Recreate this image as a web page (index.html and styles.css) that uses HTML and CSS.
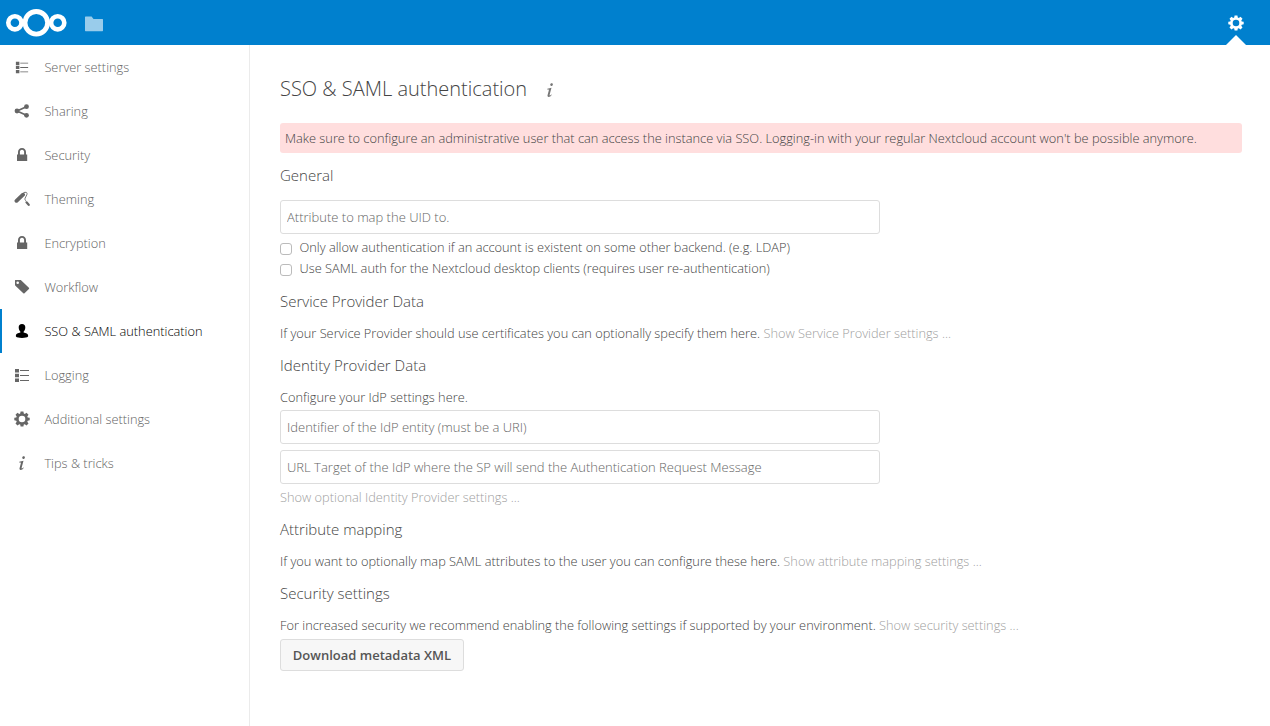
FILE: index.html
```html
<!DOCTYPE html>
<html lang="en">
<head>
<meta charset="utf-8">
<title>SSO &amp; SAML authentication</title>
<link rel="stylesheet" href="styles.css">
</head>
<body>
<svg class="defs" width="0" height="0">
  <symbol id="list" viewBox="0 0 16 16"><path d="M1 2h4v3.6H1zM1 6.7h4v3.6H1zM1 11.4h4V15H1zM6 3h9v1.1H6zM6 8h9v1.1H6zM6 13h9v1.1H6z"/></symbol>
  <symbol id="lock" viewBox="0 0 16 16"><path d="M8 1C5.500 1 4 2.900 4 5v2.500H3V14h10.200V7.500H12V5c0-2.100-1.500-4-4-4zm0 1.800c1.400 0 2.100 1 2.100 2.200v2.500H5.900V5c0-1.200.7-2.200 2.100-2.200z"/></symbol>
  <symbol id="gear" viewBox="0 0 16 16"><path fill-rule="evenodd" d="M6.600.5h2.800l.4 2 1 .4 1.700-1.200 2 2-1.200 1.700.4 1 2 .4v2.500l-2 .4-.4 1 1.200 1.700-2 2-1.700-1.200-1 .4-.4 2H6.600l-.4-2-1-.4-1.700 1.200-2-2 1.200-1.700-.4-1-2-.4V6.800l2-.4.4-1-1.200-1.700 2-2 1.700 1.200 1-.4zM8 4.700a3.300 3.300 0 1 0 0 6.600 3.300 3.300 0 0 0 0-6.600z"/></symbol>
  <symbol id="info" viewBox="0 0 16 16"><path d="M9.600 1.200c.8 0 1.300.5 1.300 1.200 0 .9-.7 1.500-1.500 1.500-.7 0-1.200-.5-1.200-1.200 0-.9.600-1.500 1.400-1.500zM5.300 6.800l4.200-1-1.800 6.700c-.2.700-.1 1 .2 1 .4 0 .8-.4 1.400-1.100l.5.400C8.800 14.300 7.800 15 6.700 15c-1.100 0-1.400-.8-1.100-1.900l1.200-4.500c.2-.8 0-1.100-.5-1.100l-1.100.1z"/></symbol>
</svg>
<header class="header">
  <div class="brand">
    <svg class="logo" viewBox="0 0 62 30" width="62" height="30"><g fill="none" stroke="#fff"><circle cx="31.300" cy="14.800" r="11.300" stroke-width="4.800"/><circle cx="9.900" cy="14.800" r="6.600" stroke-width="4.600"/><circle cx="52.700" cy="14.800" r="6.600" stroke-width="4.600"/></g></svg>
    <svg class="folder" viewBox="0 0 18 16" width="18" height="16"><path d="M.6.500h6l1.900 2.400h8.900c.4 0 .6.200.6.600v11c0 .4-.2.700-.6.700H.6c-.4 0-.6-.3-.6-.7V1.100C0 .7.200.5.600.500z"/></svg>
  </div>
  <div class="menu"><svg width="16" height="16"><use href="#gear"/></svg><span class="caret"></span></div>
</header>
<div class="layout">
  <nav class="sidebar">
    <a class="item"><svg class="icon small"><use href="#list"/></svg><span>Server settings</span></a>
    <a class="item"><svg class="icon" viewBox="0 0 16 16"><path d="M3 8l10-4.500M3 8l10 4.500" fill="none" stroke="#666" stroke-width="1.800"/><circle cx="3" cy="8" r="2.400"/><circle cx="12.500" cy="3.700" r="2.400"/><circle cx="12.500" cy="12.300" r="2.400"/></svg><span>Sharing</span></a>
    <a class="item"><svg class="icon"><use href="#lock"/></svg><span>Security</span></a>
    <a class="item"><svg class="icon" viewBox="0 0 16 16"><path d="M2.500 9.800L9 3.700" fill="none" stroke="#666" stroke-width="3.900" stroke-linecap="round"/><path d="M9.500 1.500l2.600-.2c1.200.4 1.100 1.700.6 2.700l-1.600 3.200c-.4 1.300 0 1.800 1 2.900" fill="none" stroke="#777" stroke-width="1"/><path d="M12.500 11.300l2.200 2.500" fill="none" stroke="#666" stroke-width="2.200" stroke-linecap="round"/></svg><span>Theming</span></a>
    <a class="item"><svg class="icon"><use href="#lock"/></svg><span>Encryption</span></a>
    <a class="item"><svg class="icon" viewBox="0 0 16 16"><path fill-rule="evenodd" d="M1.200 1h5c.5 0 .8.100 1.100.400l7.600 7.300c.4.400.4.800 0 1.200l-4.400 4.300c-.4.400-.8.400-1.200 0L1.400 6.800C1.100 6.500 1 6.200 1 5.800V1.400zM3.700 2.500a1.300 1.300 0 1 0 0 2.600 1.300 1.300 0 0 0 0-2.600z"/></svg><span>Workflow</span></a>
    <a class="item active"><svg class="icon" viewBox="0 0 16 16"><path d="M8 1C5.800 1 4.600 2.500 4.700 4.400c.1 1.600.6 3 1.600 4l.1 1.200C4 10.300 2 10.800 1.900 12.300v1.300C3 14.600 5 15 8 15s5-.4 6.100-1.400v-1.300c-.1-1.500-2.100-2-4.500-2.700l.1-1.200c1-1 1.500-2.400 1.600-4C11.400 2.500 10.200 1 8 1z"/></svg><span>SSO &amp; SAML authentication</span></a>
    <a class="item"><svg class="icon"><use href="#list"/></svg><span>Logging</span></a>
    <a class="item"><svg class="icon"><use href="#gear"/></svg><span>Additional settings</span></a>
    <a class="item"><svg class="icon"><use href="#info"/></svg><span>Tips &amp; tricks</span></a>
  </nav>
  <main class="content">
    <h2 class="title"><span>SSO &amp; SAML authentication</span><svg class="title-info"><use href="#info"/></svg></h2>
    <div class="warning"><span>Make sure to configure an administrative user that can access the instance via SSO. Logging-in with your regular Nextcloud account won't be possible anymore.</span></div>
    <section class="general">
      <h3 class="heading">General</h3>
      <input class="field" type="text" placeholder="Attribute to map the UID to.">
      <label class="check"><input class="box" type="checkbox"><span>Only allow authentication if an account is existent on some other backend. (e.g. LDAP)</span></label>
      <label class="check"><input class="box" type="checkbox"><span>Use SAML auth for the Nextcloud desktop clients (requires user re-authentication)</span></label>
    </section>
    <section>
      <h3 class="heading">Service Provider Data</h3>
      <p class="text"><span>If your Service Provider should use certificates you can optionally specify them here. <a class="toggle">Show Service Provider settings ...</a></span></p>
    </section>
    <section>
      <h3 class="heading">Identity Provider Data</h3>
      <p class="text"><span>Configure your IdP settings here.</span></p>
      <div class="fields">
        <input class="field" type="text" placeholder="Identifier of the IdP entity (must be a URI)">
        <input class="field" type="text" placeholder="URL Target of the IdP where the SP will send the Authentication Request Message">
      </div>
      <p class="text"><a class="toggle">Show optional Identity Provider settings ...</a></p>
    </section>
    <section>
      <h3 class="heading">Attribute mapping</h3>
      <p class="text"><span>If you want to optionally map SAML attributes to the user you can configure these here. <a class="toggle">Show attribute mapping settings ...</a></span></p>
    </section>
    <section>
      <h3 class="heading">Security settings</h3>
      <p class="text"><span>For increased security we recommend enabling the following settings if supported by your environment. <a class="toggle">Show security settings ...</a></span></p>
    </section>
    <button class="download">Download metadata XML</button>
  </main>
</div>
</body>
</html>
```
FILE: styles.css
```css
* { box-sizing: border-box; }
body { margin: 0; height: 726px; overflow: hidden; background: #fff; color: #444; font: 300 12.8px/21px "Open Sans", sans-serif; }
.defs { display: block; }
.header { height: 45px; background: #0080ce; display: flex; justify-content: space-between; }
.brand { display: flex; align-items: center; padding-left: 5px; gap: 18px; }
.folder { fill: #99cceb; margin-top: 2px; }
.menu { width: 20px; margin-right: 24px; display: flex; flex-direction: column; align-items: center; justify-content: flex-end; gap: 4px; fill: #fff; }
.caret { border: 10px solid transparent; border-bottom-color: #fff; border-top: 0; }
.layout { display: flex; height: 681px; }
.sidebar { width: 250px; border-right: 1px solid #ebebeb; flex: none; }
.item { height: 44px; display: flex; align-items: center; gap: 14px; padding-left: 14.4px; color: #636363; white-space: nowrap; }
.icon { width: 16px; height: 16px; fill: #666; flex: none; }
.small { padding: 1px; }
.active { border-left: 2px solid #0080ce; padding-left: 12.4px; color: #000; }
.active .icon { fill: #000; }
.content { flex: 1; padding: 30px 28px 0 30px; white-space: nowrap; }
.title { margin: 0 0 20px; height: 28px; display: flex; align-items: center; gap: 15px; font-weight: 300; font-size: 20px; line-height: 28px; }
.title-info { width: 16px; height: 16px; fill: #777; margin-top: 2px; }
.warning { height: 30px; padding: 5px; border-radius: 3px; background: #ffdede; margin-bottom: 11px; }
.heading { margin: 10px 0 9px; height: 24px; font-size: 15px; font-weight: 300; line-height: 22px; }
.general { display: flex; flex-direction: column; margin-bottom: 11px; }
.general .heading { margin: 0 0 12px; }
.general .field { margin-bottom: 3px; }
.field { display: block; width: 600px; height: 34px; border: 1px solid #ddd; border-radius: 3px; padding: 0 6px; font: inherit; font-size: 13px; color: #444; background: #fff; }
.field::placeholder { color: #666; opacity: 1; }
.fields { display: grid; gap: 6px; margin: 2px 0 3px; }
.check { height: 21px; display: flex; align-items: center; gap: 7.5px; }
.box { appearance: none; width: 12px; height: 12px; margin: 2px 0 0; border: 1px solid #bbb; border-radius: 3px; background: #fff; }
.text { margin: 0; height: 21px; }
.toggle { color: #a0a0a0; }
.download { display: block; margin-top: 3px; width: 184px; height: 32px; padding: 0; border: 1px solid #ddd; border-radius: 3px; background: #f7f7f7; color: #555; font: 600 13px/20px "Open Sans", sans-serif; }
```
